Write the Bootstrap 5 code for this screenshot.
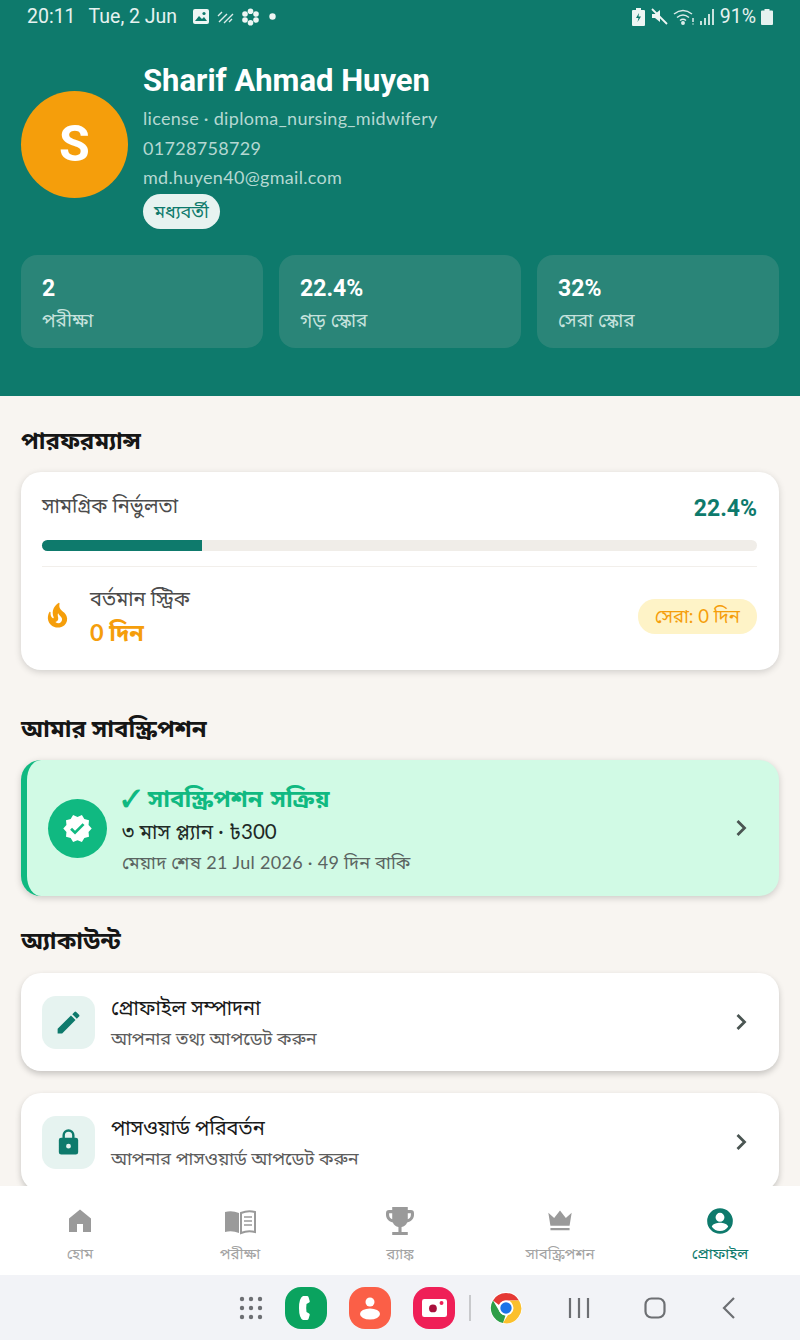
<!DOCTYPE html>
<html lang="bn">
<head>
  <meta charset="UTF-8" />
  <meta name="viewport" content="width=device-width, initial-scale=1.0">
  <title>প্রোফাইল</title>
  <link href="https://cdn.jsdelivr.net/npm/bootstrap@5.3.3/dist/css/bootstrap.min.css" rel="stylesheet">
  <style>
    html, body { height: 100%; }
    body { width: 800px; height: 1340px; overflow: hidden; background: #f8f5f1; color: #1a1a1a; font-family: Lato, "Noto Sans", "Noto Sans Bengali", "Lohit Bengali", sans-serif; }
    .app-shell { height: 1340px; }
    .teal-head { background: #0e7a6c; height: 396px; color: #fff; flex: none; }
    .status-row { height: 33px; padding: 0 27px; font-family: Roboto, sans-serif; font-size: 19.500px; color: #e6f2f0; }
    .status-date { margin-left: 13px; margin-right: 15px; }
    .status-icons { gap: 7px; }
    .status-dot { margin-left: 2px; }
    .status-right { gap: 5px; }
    .profile-row { padding: 31px 21px 0; gap: 15px; }
    .avatar-circle { width: 107px; height: 107px; background: #f59e0b; font-family: Roboto, sans-serif; font-size: 50px; font-weight: 700; margin-bottom: 4px; }
    .user-name { font-family: Roboto, sans-serif; font-size: 31px; font-weight: 700; line-height: 34px; margin-bottom: 6px; }
    .user-line { font-size: 18px; line-height: 29.500px; color: #b5d8d2; letter-spacing: .3px; }
    .level-chip { background: #e7f3f0; color: #0e7a6c; font-size: 18px; border-radius: 18px; padding: 0 11px; line-height: 35px; height: 35px; margin-top: 1px; }
    .stat-row { padding: 0 21px; gap: 16px; margin-top: 26px; }
    .stat-box { flex: 1 1 0; background: #2a8578; border-radius: 16px; height: 93px; padding: 19px 21px; }
    .stat-val { font-family: Roboto, sans-serif; font-size: 23px; font-weight: 700; line-height: 30px; }
    .stat-lbl { font-size: 19px; line-height: 28px; color: #c6e2dd; margin-top: 2px; }
    .scroll-body { flex: 1 1 auto; min-height: 0; overflow: hidden; padding: 0 21px; }
    .sec-title { font-size: 24px; font-weight: 700; line-height: 30px; color: #161616; margin: 0; }
    .perf-heading { margin-top: 29px; }
    .white-box { background: #fff; border-radius: 20px; box-shadow: 0 2px 7px rgba(0,0,0,.16); }
    .perf-box { height: 198px; margin-top: 17px; padding: 16px 22px 0 21px; margin-bottom: 43px; }
    .perf-lbl { font-size: 20px; line-height: 34px; color: #4b4b4b; }
    .perf-val { font-family: Roboto, sans-serif; font-size: 23px; font-weight: 700; color: #0e7a6c; line-height: 26px; margin-top: 8px; }
    .perf-track { height: 11px; background: #f0ede8; border-radius: 6px; margin-top: 18px; }
    .perf-fill { height: 11px; background: #0e7a6c; border-radius: 6px 0 0 6px; }
    .perf-sep { height: 1px; background: #f2efeb; margin-top: 15px; margin-bottom: 14px; }
    .streak-icon { width: 48px; margin-left: 1px; margin-right: -1px; }
    .streak-lbl { font-size: 20px; line-height: 34px; color: #4b4b4b; }
    .streak-val { font-size: 23.500px; font-weight: 700; line-height: 34px; color: #f59e0b; }
    .best-chip { background: #fef3c7; color: #f59e0b; border-radius: 17px; font-size: 18.500px; padding: 0 17px; line-height: 35px; height: 35px; margin-top: 2px; }
    .sub-box { height: 136px; margin-top: 17px; margin-bottom: 29px; background: #d1fae5; border-left: 6px solid #10b981; border-radius: 20px; box-shadow: 0 2px 7px rgba(0,0,0,.18); padding-left: 21px; padding-right: 31px; gap: 15px; }
    .sub-circle { width: 59px; height: 59px; background: #10b981; }
    .sub-title { font-size: 24px; font-weight: 700; line-height: 34px; color: #10b981; word-spacing: 2px; }
    .sub-plan { font-size: 20.500px; line-height: 33px; color: #1f2a27; }
    .sub-date { font-size: 18px; line-height: 28px; color: #5a6461; letter-spacing: .3px; }
    .acct-box { height: 98px; margin-top: 18px; padding: 0 31px 0 21px; gap: 16px; margin-bottom: 22px; box-shadow: 0 3px 6px rgba(0,0,0,.2); }
    .acct-box + .acct-box { margin-top: 0; }
    .acct-icon { width: 53px; height: 53px; background: #e6f3f0; border-radius: 14px; }
    .acct-title { font-size: 20px; line-height: 28px; color: #1a1a1a; margin-bottom: 3px; }
    .acct-sub { font-size: 18px; line-height: 28px; color: #5c5c5c; }
    .bottom-tabs { height: 89px; flex: none; background: #fff; position: relative; z-index: 2; }
    .tab-item { flex: 1 1 0; color: #a3a3a3; font-size: 15px; line-height: 20px; padding-top: 21px; gap: 8px; }
    .tab-item.tab-on { color: #0e7a6c; }
    .sys-bar { height: 65px; flex: none; background: #f2f3f7; padding-left: 238px; }
    .sys-grid { margin-right: 21px; }
    .sys-sep { width: 2px; height: 26px; background: #c8c9cc; margin: 0 19px 0 14px; }
    .sys-app { width: 42px; height: 42px; border-radius: 16px; margin-right: 22px; }
    .sys-app-last { margin-right: 0; }
    .app-phone { background: #0aa35f; }
    .app-contact { background: #fb5f47; }
    .app-camera { background: #ef1f57; }
    .nav-chrome { margin-right: 46px; }
    .nav-recent { margin-right: 54px; }
    .nav-home { margin-right: 56px; }
  </style>
</head>
<body>
<div class="app-shell d-flex flex-column">

  <div class="teal-head">
    <div class="status-row d-flex align-items-center">
      <span>20:11</span>
      <span class="status-date">Tue, 2 Jun</span>
      <div class="d-flex align-items-center status-icons">
        <svg width="18" height="16" viewBox="0 0 18 16"><rect x="1" y="0" width="16" height="15" rx="2" fill="#eef6f4"/><path d="M3 12l4-5 3 3 2-2 3 4z" fill="#0e7a6c"/><circle cx="12" cy="4.500" r="1.600" fill="#0e7a6c"/></svg>
        <svg width="17" height="14" viewBox="0 0 17 14" stroke="#dcecea" stroke-width="1.400" fill="none"><path d="M1 6l4-4M2 12L10 4M7 13l9-9M12 12l3-3"/></svg>
        <svg width="19" height="18" viewBox="0 0 19 18" fill="#eef6f4"><circle cx="9.500" cy="3.200" r="2.800"/><circle cx="9.500" cy="14.800" r="2.800"/><circle cx="4" cy="6" r="2.800"/><circle cx="15" cy="6" r="2.800"/><circle cx="4" cy="12" r="2.800"/><circle cx="15" cy="12" r="2.800"/><circle cx="9.500" cy="9" r="1.500" fill="#0e7a6c"/></svg>
        <svg class="status-dot" width="7" height="7"><circle cx="3.500" cy="3.500" r="3.200" fill="#eef6f4"/></svg>
      </div>
      <div class="d-flex align-items-center ms-auto status-right">
        <svg width="13" height="18" viewBox="0 0 13 18"><path d="M4 0h5v2h3a1 1 0 0 1 1 1v14a1 1 0 0 1-1 1H1a1 1 0 0 1-1-1V3a1 1 0 0 1 1-1h3z" fill="#eef6f4"/><path d="M7 5L4 10h2.500L5.500 14 9 8.500H6.500z" fill="#0e7a6c"/></svg>
        <svg width="18" height="17" viewBox="0 0 18 17"><path d="M2 6h3l5-4v12l-5-4H2z" fill="#eef6f4"/><path d="M2 1l15 15" stroke="#eef6f4" stroke-width="1.800"/></svg>
        <svg width="22" height="17" viewBox="0 0 22 17" fill="none" stroke="#dcecea" stroke-width="1.500"><path d="M1 6q9-7 18 0M4 9.500q6-5 12 0M7 12.500q3-2.500 6 0"/><circle cx="10" cy="15" r="1.200" fill="#dcecea"/><path d="M20 10v4M20 15.500v1"/></svg>
        <svg width="15" height="16" viewBox="0 0 15 16" fill="#c8e2dd"><rect x="0" y="12" width="2" height="4"/><rect x="4" y="9" width="2" height="7"/><rect x="8" y="5" width="2" height="11"/><rect x="12" y="0" width="2" height="16"/></svg>
        <span>91%</span>
        <svg width="12" height="16" viewBox="0 0 12 16"><path d="M3.500 0h5v1.500H11a1 1 0 0 1 1 1V15a1 1 0 0 1-1 1H1a1 1 0 0 1-1-1V2.500a1 1 0 0 1 1-1h2.500z" fill="#e6f2f0"/></svg>
      </div>
    </div>

    <div class="profile-row d-flex align-items-center">
      <div class="avatar-circle rounded-circle d-flex align-items-center justify-content-center flex-shrink-0">S</div>
      <div>
        <div class="user-name">Sharif Ahmad Huyen</div>
        <div class="user-line">license · diploma_nursing_midwifery</div>
        <div class="user-line">01728758729</div>
        <div class="user-line">md.huyen40@gmail.com</div>
        <div class="level-chip d-inline-block">মধ্যবর্তী</div>
      </div>
    </div>

    <div class="stat-row d-flex">
      <div class="stat-box"><div class="stat-val">2</div><div class="stat-lbl">পরীক্ষা</div></div>
      <div class="stat-box"><div class="stat-val">22.4%</div><div class="stat-lbl">গড় স্কোর</div></div>
      <div class="stat-box"><div class="stat-val">32%</div><div class="stat-lbl">সেরা স্কোর</div></div>
    </div>
  </div>

  <div class="scroll-body">
    <h2 class="sec-title perf-heading">পারফরম্যান্স</h2>
    <div class="white-box perf-box">
      <div class="d-flex justify-content-between align-items-center">
        <span class="perf-lbl">সামগ্রিক নির্ভুলতা</span>
        <span class="perf-val">22.4%</span>
      </div>
      <div class="perf-track"><div class="perf-fill" style="width:22.4%"></div></div>
      <div class="perf-sep"></div>
      <div class="d-flex align-items-center">
        <div class="streak-icon">
          <svg width="29" height="29" viewBox="0 0 24 24"><path d="M19.480 12.350c-1.570-4.080-7.160-4.300-5.810-10.230.1-.44-.37-.78-.75-.55C9.290 3.710 6.680 8 8.870 13.620c.18.46-.36.890-.75.590-1.810-1.370-2-3.340-1.840-4.750.06-.52-.62-.77-.91-.34C4.690 10.160 4 11.840 4 14.370c.38 5.600 5.110 7.320 6.810 7.540 2.430.31 5.060-.14 6.950-1.870 2.080-1.930 2.840-5.010 1.720-7.690zm-9.280 5.030c1.440-.35 2.180-1.390 2.380-2.310.33-1.430-.96-2.830-.09-5.090.33 1.870 3.270 3.040 3.270 5.080.08 2.530-2.660 4.700-5.560 2.320z" fill="#f59e0b"/></svg>
        </div>
        <div>
          <div class="streak-lbl">বর্তমান স্ট্রিক</div>
          <div class="streak-val">0 দিন</div>
        </div>
        <span class="best-chip ms-auto">সেরা: 0 দিন</span>
      </div>
    </div>

    <h2 class="sec-title">আমার সাবস্ক্রিপশন</h2>
    <div class="sub-box d-flex align-items-center">
      <div class="sub-circle rounded-circle d-flex align-items-center justify-content-center flex-shrink-0">
        <svg width="31" height="31" viewBox="0 0 24 24"><path d="M23 12l-2.440-2.780.340-3.680-3.610-.820-1.890-3.180L12 3 8.600 1.540 6.710 4.720l-3.610.810.340 3.680L1 12l2.440 2.780-.340 3.690 3.610.820 1.890 3.180L12 21l3.400 1.460 1.890-3.180 3.610-.820-.340-3.680L23 12zm-12.910 4.720l-3.800-3.810 1.480-1.480 2.320 2.330 5.850-5.870 1.480 1.480-7.330 7.350z" fill="#fff"/></svg>
      </div>
      <div class="flex-grow-1">
        <div class="sub-title">✓ সাবস্ক্রিপশন সক্রিয়</div>
        <div class="sub-plan">৩ মাস প্ল্যান · ৳300</div>
        <div class="sub-date">মেয়াদ শেষ 21 Jul 2026 · 49 দিন বাকি</div>
      </div>
      <svg width="13" height="18" viewBox="0 0 13 18"><path d="M2.500 2l7 7-7 7" fill="none" stroke="#4a5552" stroke-width="2.800"/></svg>
    </div>

    <h2 class="sec-title">অ্যাকাউন্ট</h2>
    <div class="white-box acct-box d-flex align-items-center">
      <div class="acct-icon d-flex align-items-center justify-content-center flex-shrink-0">
        <svg width="29" height="29" viewBox="0 0 24 24"><path d="M3 17.250V21h3.750L17.810 9.940l-3.750-3.750L3 17.250zM20.710 7.040a1 1 0 0 0 0-1.410l-2.340-2.340a1 1 0 0 0-1.410 0l-1.830 1.830 3.750 3.750 1.830-1.830z" fill="#0e7a6c"/></svg>
      </div>
      <div class="flex-grow-1">
        <div class="acct-title">প্রোফাইল সম্পাদনা</div>
        <div class="acct-sub">আপনার তথ্য আপডেট করুন</div>
      </div>
      <svg width="13" height="18" viewBox="0 0 13 18"><path d="M2.500 2l7 7-7 7" fill="none" stroke="#4a5552" stroke-width="2.800"/></svg>
    </div>
    <div class="white-box acct-box d-flex align-items-center">
      <div class="acct-icon d-flex align-items-center justify-content-center flex-shrink-0">
        <svg width="29" height="29" viewBox="0 0 24 24"><path d="M18 8h-1V6A5 5 0 0 0 7 6v2H6a2 2 0 0 0-2 2v10a2 2 0 0 0 2 2h12a2 2 0 0 0 2-2V10a2 2 0 0 0-2-2zM9 6a3 3 0 0 1 6 0v2H9zm3 11a2 2 0 1 1 0-4 2 2 0 0 1 0 4z" fill="#0e7a6c"/></svg>
      </div>
      <div class="flex-grow-1">
        <div class="acct-title">পাসওয়ার্ড পরিবর্তন</div>
        <div class="acct-sub">আপনার পাসওয়ার্ড আপডেট করুন</div>
      </div>
      <svg width="13" height="18" viewBox="0 0 13 18"><path d="M2.500 2l7 7-7 7" fill="none" stroke="#4a5552" stroke-width="2.800"/></svg>
    </div>
  </div>

  <nav class="bottom-tabs d-flex">
    <div class="tab-item d-flex flex-column align-items-center">
      <svg width="28" height="28" viewBox="-2 -2 28 28"><path d="M12 .5L1 9.500V23h8v-8h6v8h8V9.500z" fill="#9a9a9a"/></svg><span>হোম</span>
    </div>
    <div class="tab-item d-flex flex-column align-items-center">
      <svg width="32" height="28" viewBox="0 0 32 28"><path d="M1 5q7-2 14 1v20q-7-3-14-1z" fill="#9a9a9a"/><path d="M17 6q7-3 14-1v20q-7-2-14 1z" fill="none" stroke="#9a9a9a" stroke-width="2"/><path d="M20 10h8M20 14h8M20 18h8" stroke="#9a9a9a" stroke-width="1.500"/></svg><span>পরীক্ষা</span>
    </div>
    <div class="tab-item d-flex flex-column align-items-center">
      <svg width="28" height="28" viewBox="3 3 18 18"><path d="M19 5h-2V3H7v2H5a2 2 0 0 0-2 2v1c0 2.500 1.900 4.600 4.400 4.900A5 5 0 0 0 11 15.900V19H7v2h10v-2h-4v-3.100a5 5 0 0 0 3.600-3C19.100 12.600 21 10.500 21 8V7a2 2 0 0 0-2-2zM5 8V7h2v3.800A3 3 0 0 1 5 8zm14 0a3 3 0 0 1-2 2.800V7h2z" fill="#9a9a9a"/></svg><span>র‍্যাঙ্ক</span>
    </div>
    <div class="tab-item d-flex flex-column align-items-center">
      <svg width="28" height="28" viewBox="0 0 24 24"><path d="M2 5l5 4.500L12 3l5 6.500L22 5l-1.800 11H3.800zM3.800 18h16.400v2H3.800z" fill="#9a9a9a"/></svg><span>সাবস্ক্রিপশন</span>
    </div>
    <div class="tab-item tab-on d-flex flex-column align-items-center">
      <svg width="28" height="28" viewBox="0 0 24 24"><path d="M12 1a11 11 0 1 0 0 22 11 11 0 0 0 0-22zm0 4a3.800 3.800 0 1 1 0 7.600A3.800 3.800 0 0 1 12 5zm0 15.500a8.600 8.600 0 0 1-7-3.600c.1-2.300 4.700-3.500 7-3.500s6.900 1.200 7 3.500a8.600 8.600 0 0 1-7 3.600z" fill="#0e7a6c"/></svg><span>প্রোফাইল</span>
    </div>
  </nav>

  <div class="sys-bar d-flex align-items-center">
    <svg class="sys-grid" width="26" height="24" viewBox="0 0 26 24" fill="#6d6f73"><circle cx="4" cy="3" r="2.200"/><circle cx="13" cy="3" r="2.200"/><circle cx="22" cy="3" r="2.200"/><circle cx="4" cy="12" r="2.200"/><circle cx="13" cy="12" r="2.200"/><circle cx="22" cy="12" r="2.200"/><circle cx="4" cy="21" r="2.200"/><circle cx="13" cy="21" r="2.200"/><circle cx="22" cy="21" r="2.200"/></svg>
    <div class="sys-app app-phone d-flex align-items-center justify-content-center">
      <svg width="14" height="24" viewBox="0 0 14 24"><path d="M4 0h4q1.200 0 1.500 1l1.200 4q.3 1-.6 1.500L7.500 8q-.6 4 0 8l2.600 1.500q.9.5.6 1.500l-1.200 4q-.3 1-1.500 1H4Q0 22 0 12T4 0z" fill="#fff"/></svg>
    </div>
    <div class="sys-app app-contact d-flex align-items-center justify-content-center">
      <svg width="26" height="28" viewBox="0 0 26 28" fill="#fff"><circle cx="13" cy="8" r="4.500"/><ellipse cx="13" cy="20" rx="10" ry="5.500"/></svg>
    </div>
    <div class="sys-app sys-app-last app-camera d-flex align-items-center justify-content-center">
      <svg width="25" height="18" viewBox="0 0 32 23"><rect width="32" height="23" rx="3" fill="#fff"/><circle cx="14" cy="12" r="5" fill="#a90f3c"/><circle cx="25" cy="5" r="2.500" fill="#ef1f57"/></svg>
    </div>
    <div class="sys-sep"></div>
    <svg class="nav-chrome" width="32" height="32" viewBox="0 0 32 32">
      <circle cx="16" cy="16" r="16" fill="#fff"/>
      <path d="M16 1a15 15 0 0 1 13 7.500H16a7.500 7.500 0 0 0-7 4.500L3 8.500A15 15 0 0 1 16 1z" fill="#e53935"/>
      <path d="M3 8.500l6.500 11a7.500 7.500 0 0 0 6 4L13 31A15 15 0 0 1 3 8.500z" fill="#2e9e47"/>
      <path d="M29 8.500A15 15 0 0 1 13 31l7.500-12a7.500 7.500 0 0 0-1-10.500z" fill="#fbc02d"/>
      <circle cx="16" cy="16" r="7.500" fill="#fff"/><circle cx="16" cy="16" r="5.700" fill="#1a73e8"/>
    </svg>
    <svg class="nav-recent" width="22" height="22" viewBox="0 0 22 22" stroke="#6d6f73" stroke-width="2.200"><path d="M2 1v20M11 1v20M20 1v20"/></svg>
    <svg class="nav-home" width="22" height="22" viewBox="0 0 22 22"><rect x="1.500" y="1.500" width="19" height="19" rx="6" fill="none" stroke="#6d6f73" stroke-width="2.200"/></svg>
    <svg width="14" height="24" viewBox="0 0 14 24"><path d="M12 2L2 12l10 10" fill="none" stroke="#6d6f73" stroke-width="2.200"/></svg>
  </div>
</div>
<script src="https://cdn.jsdelivr.net/npm/bootstrap@5.3.3/dist/js/bootstrap.bundle.min.js"></script>
</body>
</html>
